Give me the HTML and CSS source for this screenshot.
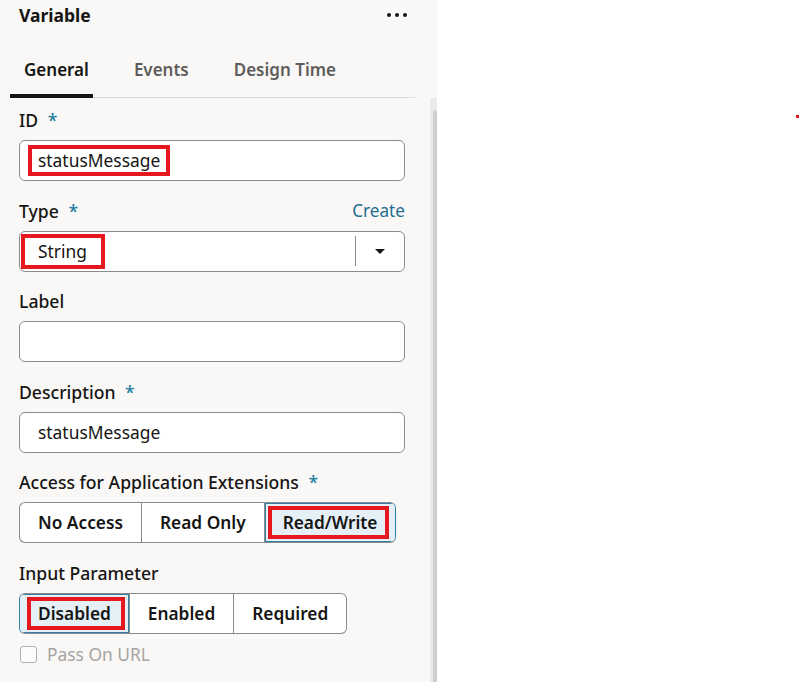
FILE: index.html
```html
<!DOCTYPE html>
<html>
<head>
<meta charset="utf-8">
<link rel="stylesheet" href="styles.css">
</head>
<body>
<div class="panel">
  <div class="header">
    <div class="title">Variable</div>
    <div class="more"><span></span><span></span><span></span></div>
  </div>
  <div class="tabs">
    <div class="tab active">General</div>
    <div class="tab">Events</div>
    <div class="tab">Design Time</div>
  </div>
  <div class="body">
    <div class="form">
      <div class="field">
        <div class="label">ID <span class="req">*</span></div>
        <div class="input"><span class="mark m-input">statusMessage</span></div>
      </div>
      <div class="field">
        <div class="label row">
          <span>Type <span class="req">*</span></span>
          <span class="link">Create</span>
        </div>
        <div class="input select">
          <span class="value"><span class="mark m-select">String</span></span>
          <span class="divider"></span>
          <span class="caret"></span>
        </div>
      </div>
      <div class="field">
        <div class="label">Label</div>
        <div class="input"></div>
      </div>
      <div class="field">
        <div class="label">Description <span class="req">*</span></div>
        <div class="input">statusMessage</div>
      </div>
      <div class="field">
        <div class="label">Access for Application Extensions <span class="req">*</span></div>
        <div class="group">
          <div class="btn">No Access</div>
          <div class="btn">Read Only</div>
          <div class="btn selected"><span class="mark m-rw">Read/Write</span></div>
        </div>
      </div>
      <div class="field">
        <div class="label">Input Parameter</div>
        <div class="group">
          <div class="btn selected"><span class="mark m-dis">Disabled</span></div>
          <div class="btn">Enabled</div>
          <div class="btn">Required</div>
        </div>
      </div>
      <div class="check">
        <span class="box"></span>
        <span class="check-label">Pass On URL</span>
      </div>
    </div>
    <div class="scrollbar"><div class="thumb"></div></div>
  </div>
</div>
<div class="canvas"><span class="dot"></span></div>
</body>
</html>
```
FILE: styles.css
```css
* { box-sizing: border-box; }
html, body { margin: 0; padding: 0; }
body {
  width: 802px;
  height: 682px;
  overflow: hidden;
  display: flex;
  font-family: "Noto Sans", "Open Sans", sans-serif;
  color: #161513;
  background: #ffffff;
}
.panel {
  width: 437px;
  height: 682px;
  background: #f9f8f6;
  display: flex;
  flex-direction: column;
  flex-shrink: 0;
}
.header {
  height: 30px;
  padding: 0 30px 0 19px;
  display: flex;
  align-items: center;
  justify-content: space-between;
}
.title {
  font-size: 17.5px;
  font-weight: 700;
  line-height: 24px;
  margin-top: -1px;
}
.more {
  display: flex;
  gap: 4px;
  margin-top: -1px;
}
.more span {
  width: 4px;
  height: 4px;
  border-radius: 50%;
  background: #161513;
}
.tabs {
  margin-left: 10px;
  width: 405px;
  height: 68px;
  display: flex;
  gap: 27px;
  border-bottom: 1px solid #dfdddb;
}
.tab {
  padding: 0 4px 12px 14px;
  font-size: 17px;
  line-height: 24px;
  font-weight: 600;
  color: #5f5d5b;
  display: flex;
  align-items: flex-end;
  border-bottom: 4px solid transparent;
  margin-bottom: -1px;
}
.tab.active {
  color: #161513;
  border-bottom-color: #161513;
}
.body {
  flex: 1;
  display: flex;
  min-height: 0;
}
.form {
  width: 430px;
  padding: 10px 25px 0 19px;
  display: flex;
  flex-direction: column;
  gap: 17.5px;
}
.field { display: flex; flex-direction: column; }
.label {
  font-size: 17.6px;
  font-weight: 500;
  line-height: 24px;
  margin-bottom: 8px;
}
.label.row { display: flex; justify-content: space-between; }
.req {
  color: #237fa3;
  margin-left: 5px;
}
.link { color: #1f6f8e; font-weight: 400; font-size: 17.2px; }
.input {
  height: 41px;
  border: 1px solid #8d8b89;
  border-radius: 6px;
  background: #ffffff;
  display: flex;
  align-items: center;
  padding: 0 18px;
  font-size: 17.4px;
}
.select { padding-right: 0; }
.select .value { flex: 1; }
.divider {
  width: 1px;
  height: 30px;
  background: #8d8b89;
}
.caret {
  width: 48px;
  display: flex;
  justify-content: center;
}
.caret::before {
  content: "";
  border-left: 5px solid transparent;
  border-right: 5px solid transparent;
  border-top: 5px solid #161513;
}
.mark {
  border: 4px solid #e5181f;
  display: inline-block;
  line-height: 23px;
}
.m-input { padding: 0 6px; margin: 0 -10px; }
.m-select { padding: 2px 14px 2px 13px; margin: 0 -18px 0 -17px; }
.m-rw { padding: 1px 8px 1px 11px; margin: -5px -12px -5px -15px; }
.m-dis { padding: 1px 10px 1px 7px; margin: -5px -14px -5px -11px; }
.group {
  display: flex;
  align-self: flex-start;
  border: 1px solid #8d8b89;
  border-radius: 6px;
  overflow: hidden;
  background: #ffffff;
}
.btn {
  height: 39px;
  padding: 0 18px;
  font-size: 17.3px;
  font-weight: 600;
  display: flex;
  align-items: center;
  border-left: 1px solid #8d8b89;
}
.btn:first-child { border-left: none; }
.group:has(.selected:last-child) { border-right-color: #2e80a6; }
.group:has(.selected:first-child) { border-left-color: #2e80a6; }
.btn.selected {
  background: #e4f0f6;
}
.group .btn.selected:first-child { box-shadow: inset 0 1px 0 #2e80a6, inset 0 -1px 0 #2e80a6, inset -1px 0 0 #2e80a6; }
.group .btn.selected:last-child { box-shadow: inset 0 1px 0 #2e80a6, inset 0 -1px 0 #2e80a6, inset 1px 0 0 #2e80a6; }
.check {
  display: flex;
  align-items: center;
  gap: 10px;
  margin-top: -9px;
  padding-left: 1px;
}
.box {
  width: 17px;
  height: 17px;
  border: 1px solid #b3b1af;
  border-radius: 3px;
  background: #fbfbfa;
}
.check-label {
  color: #a6a4a2;
  font-size: 17.4px;
  line-height: 24px;
}
.scrollbar {
  width: 7px;
  background: #ebeae8;
  display: flex;
  justify-content: flex-end;
  padding-top: 12px;
}
.thumb {
  width: 4px;
  height: 100%;
  background: #d0cfcd;
  border-radius: 2px 2px 0 0;
}
.canvas {
  flex: 1;
  position: relative;
}
.dot {
  position: absolute;
  left: 359px;
  top: 115px;
  width: 3px;
  height: 3px;
  background: #e5181f;
}
```
